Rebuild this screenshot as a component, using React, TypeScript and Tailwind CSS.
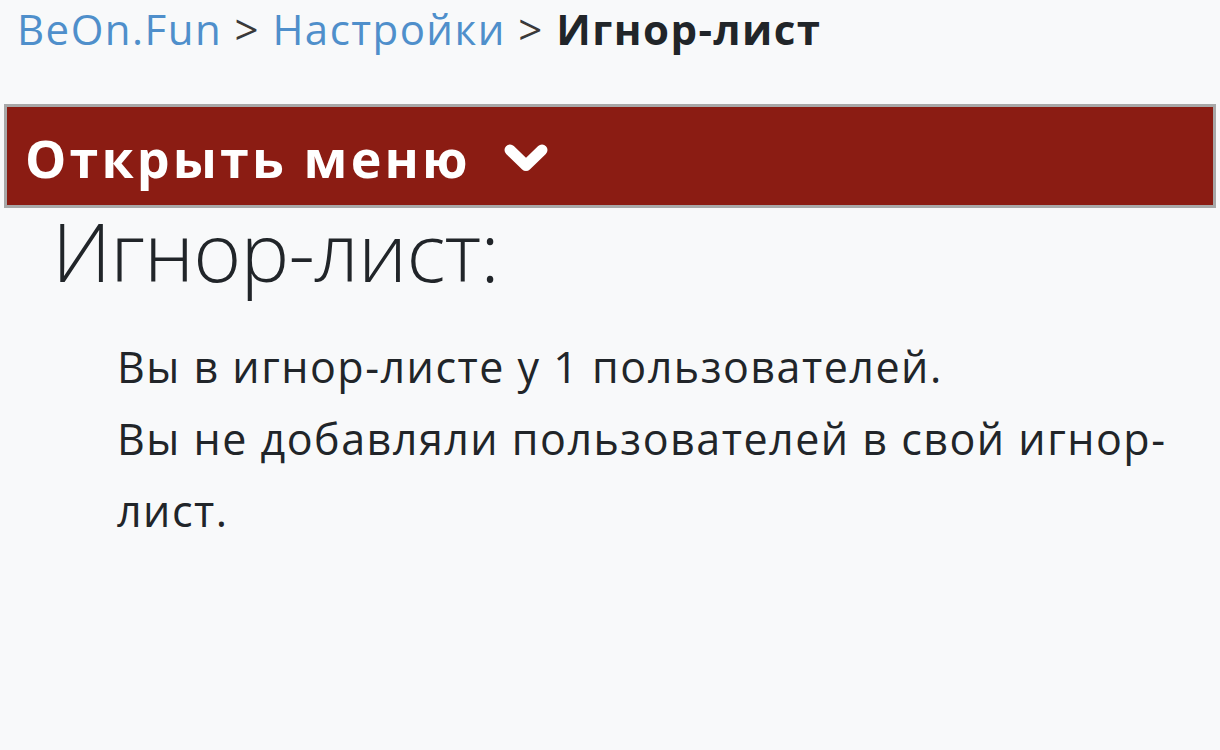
function ChevronDown() {
  return (
    <svg width="44" height="28" viewBox="0 0 44 28" className="shrink-0">
      <path d="M6 6 L22 21.5 L38 6" fill="none" stroke="white" strokeWidth="11" strokeLinecap="round" strokeLinejoin="round" />
    </svg>
  );
}

export default function App() {
  return (
    <div className="min-h-[750px] w-full bg-[#f8f9fa] font-['Open_Sans',sans-serif] text-[#212529]">
      <nav className="h-[56px] pl-[17px] pt-[1px] text-[42px] leading-[56px] tracking-[0.035em] whitespace-nowrap">
        <a href="#" className="text-[#4f8fcb]">BeOn.Fun</a>
        <span className="text-[#3a3a3a]"> &gt; </span>
        <a href="#" className="text-[#4f8fcb]">Настройки</a>
        <span className="text-[#3a3a3a]"> &gt; </span>
        <span className="font-bold">Игнор-лист</span>
      </nav>

      <div className="mx-[4px] mt-[48px] border-[3px] border-[#a8a8a8] bg-[#8b1c13]">
        <button className="flex h-[98px] items-center gap-[33px] pl-[18px] pt-[4px] text-[52px] font-bold tracking-[0.06em] text-white">
          Открыть меню
          <ChevronDown />
        </button>
      </div>

      <h1 className="mt-[2px] pl-[52px] text-[82px] font-light leading-[80px] tracking-[-0.01em]">Игнор-лист:</h1>

      <div className="mt-[41px] w-[1170px] pl-[117px] text-[43px] leading-[72px] tracking-[0.035em]">
        <p>Вы в игнор-листе у 1 пользователей.</p>
        <p>Вы не добавляли пользователей в свой игнор-лист.</p>
      </div>
    </div>
  );
}
